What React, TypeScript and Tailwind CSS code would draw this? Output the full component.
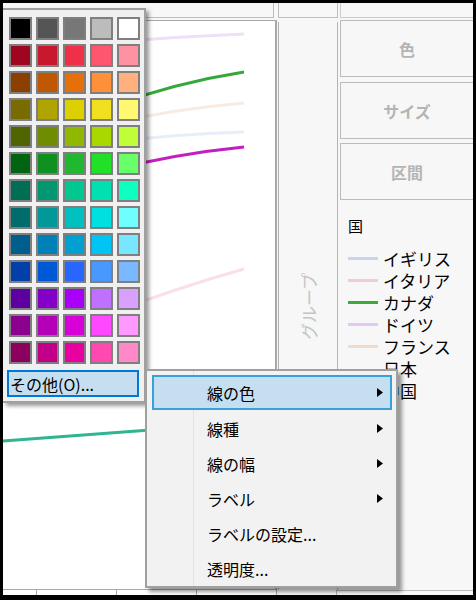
import React from 'react';

// 13 rows x 5 columns of the colour picker
const swatches: string[][] = [
  ['bg-[#000000]', 'bg-[#555555]', 'bg-[#777777]', 'bg-[#bcbcbc]', 'bg-[#ffffff]'],
  ['bg-[#a00520]', 'bg-[#c8182e]', 'bg-[#ef3048]', 'bg-[#ff5670]', 'bg-[#ff92a2]'],
  ['bg-[#8c4000]', 'bg-[#bf5800]', 'bg-[#e5700a]', 'bg-[#ff903a]', 'bg-[#ffb07e]'],
  ['bg-[#786c00]', 'bg-[#b0a400]', 'bg-[#dcd000]', 'bg-[#f0e020]', 'bg-[#fff870]'],
  ['bg-[#506400]', 'bg-[#708c00]', 'bg-[#90b800]', 'bg-[#a8d800]', 'bg-[#c0ff38]'],
  ['bg-[#006410]', 'bg-[#109020]', 'bg-[#20b830]', 'bg-[#20e028]', 'bg-[#68ff68]'],
  ['bg-[#006e54]', 'bg-[#009870]', 'bg-[#00c890]', 'bg-[#00e0b0]', 'bg-[#10ffc0]'],
  ['bg-[#006c6c]', 'bg-[#009898]', 'bg-[#00c0c0]', 'bg-[#00e0e0]', 'bg-[#70ffff]'],
  ['bg-[#005e8c]', 'bg-[#0080b8]', 'bg-[#00a0d0]', 'bg-[#00c4f4]', 'bg-[#78e6ff]'],
  ['bg-[#0040a8]', 'bg-[#0058d8]', 'bg-[#2866ff]', 'bg-[#4898ff]', 'bg-[#7ab8ff]'],
  ['bg-[#5e00a0]', 'bg-[#8400c8]', 'bg-[#a800f8]', 'bg-[#c070ff]', 'bg-[#d8a0ff]'],
  ['bg-[#8c0090]', 'bg-[#b400b8]', 'bg-[#d800d8]', 'bg-[#ff48ff]', 'bg-[#ff98ff]'],
  ['bg-[#8c0060]', 'bg-[#c00088]', 'bg-[#e800a0]', 'bg-[#ff48b0]', 'bg-[#ff88c8]'],
];

const legend = [
  { name: 'イギリス', color: 'bg-[#c8d4ee]' },
  { name: 'イタリア', color: 'bg-[#f0ccd3]' },
  { name: 'カナダ', color: 'bg-[#3aaa3a]' },
  { name: 'ドイツ', color: 'bg-[#e2c8f4]' },
  { name: 'フランス', color: 'bg-[#f0dccb]' },
  { name: '日本', color: 'bg-transparent' },
  { name: '中国', color: 'bg-transparent' },
];

const menuItems = [
  { label: '線の色', sub: true, active: true },
  { label: '線種', sub: true },
  { label: '線の幅', sub: true },
  { label: 'ラベル', sub: true },
  { label: 'ラベルの設定...' },
  { label: '透明度...' },
];

function ShelfButton({ label }: { label: string }) {
  return (
    <div className="h-[57px] border-y border-l border-[#bcbcbc] bg-[#f7f7f7] flex items-center justify-center text-[16px] font-bold text-[#b4b4b4]">
      {label}
    </div>
  );
}

function ChartLines() {
  return (
    <svg className="absolute left-0 top-0" width="274" height="570" viewBox="0 0 274 570" fill="none">
      <path d="M0 32 Q 120 18 241 13" stroke="#efdff8" strokeWidth="3" />
      <path d="M100 88 Q 170 62 241 51" stroke="#36a83a" strokeWidth="3" />
      <path d="M100 104 Q 170 88 241 82" stroke="#f8ebe1" strokeWidth="3" />
      <path d="M100 122 Q 170 113 241 111" stroke="#e8eef9" strokeWidth="3" />
      <path d="M100 151 Q 170 133 241 126" stroke="#c21ec2" strokeWidth="3" />
      <path d="M100 295 Q 170 268 241 248" stroke="#f9e0e6" strokeWidth="3" />
      <path d="M0 420 L 241 402" stroke="#2fb58f" strokeWidth="3" />
    </svg>
  );
}

export default function App() {
  return (
    <div className="w-[476px] h-[600px] bg-black pt-[3px] pl-[3px] font-['Noto_Sans_CJK_JP','Noto_Sans',sans-serif] text-black">
      <div className="relative w-[470px] h-[592px] bg-[#f7f7f7] flex flex-col overflow-hidden">
        {/* Header row */}
        <div className="flex h-[15px] shrink-0">
          <div className="w-[271px] border-r border-b border-[#bdbdbd]" />
          <div className="w-[4px]" />
          <div className="w-[60px] border-x border-b border-[#bdbdbd]" />
          <div className="w-[2px]" />
          <div className="flex-1 border-l border-b border-[#c8cec4]" />
        </div>

        {/* Main row */}
        <div className="flex flex-1 min-h-0">
          {/* Chart */}
          <div className="relative w-[274px] mt-[2px] bg-white border-t border-r-2 border-b border-[#a9a9a9]">
            <ChartLines />
          </div>

          {/* Group shelf */}
          <div className="ml-[1px] w-[60px] mt-[4px] border-x border-[#b4b4b4] bg-[#f7f7f7] flex items-center justify-center">
            <span className="[writing-mode:vertical-rl] [text-orientation:sideways] rotate-180 text-[17px] leading-none text-[#c4c4c4]">
              グループ
            </span>
          </div>

          {/* Right panel */}
          <div className="ml-[2px] flex-1 mt-[2px] flex flex-col">
            <ShelfButton label="色" />
            <div className="h-[5px]" />
            <ShelfButton label="サイズ" />
            <div className="h-[4px]" />
            <ShelfButton label="区間" />
            <div className="pl-[8px] pt-[17px]">
              <div className="h-[16px] flex items-center text-[15px] leading-none">国</div>
              <div className="mt-[14px] flex flex-col">
                {legend.map((item) => (
                  <div key={item.name} className="h-[22px] flex items-center">
                    <div className={`w-[30px] h-[3px] ${item.color}`} />
                    <span className="ml-[5px] text-[17px] leading-none">{item.name}</span>
                  </div>
                ))}
              </div>
            </div>
          </div>
        </div>

        {/* Bottom axis strip */}
        <div className="flex h-[5px] shrink-0">
          <div className="w-[34px] bg-white border-r border-[#a9a9a9]" />
          <div className="w-[80px] bg-white border-r border-[#a9a9a9]" />
          <div className="w-[80px] bg-white border-r border-[#a9a9a9]" />
          <div className="w-[80px] bg-white border-r border-[#a9a9a9]" />
          <div className="w-[60px] border-r border-[#b4b4b4]" />
          <div className="flex-1 border-t border-[#bcbcbc]" />
        </div>

        {/* Colour picker popup */}
        <div className="absolute left-0 top-[5px] w-[143px] h-[395px] bg-[#f0f0f0] border-t-2 border-r-2 border-b-2 border-[#a0a0a0] shadow-[3px_3px_4px_rgba(0,0,0,0.4)] pt-[7px] pl-[6px]">
          <div className="grid grid-cols-[repeat(5,23px)] gap-[4px]">
            {swatches.flat().map((c, i) => (
              <div key={i} className={`w-[23px] h-[23px] border-2 border-[#7f7f7f] ${c}`} />
            ))}
          </div>
          <div className="mt-[6px] -ml-[2px] w-[132px] h-[27px] border-2 border-[#0078d7] bg-[#c5dff0] flex items-center pl-[1px] text-[16px] leading-none">
            その他(O)...
          </div>
        </div>

        {/* Context menu */}
        <div className="absolute left-[142px] top-[366px] w-[253px] h-[219px] bg-[#f2f2f2] border-2 border-[#a0a0a0] shadow-[4px_4px_4px_rgba(0,0,0,0.4)] pt-[4px] pl-[5px] pr-[4px]">
          <div className="absolute left-[46px] top-0 bottom-0 w-[1px] bg-[#e2e2e2]" />
          {menuItems.map((item) => (
            <div
              key={item.label}
              className={`relative h-[35px] flex items-center border-2 pl-[53px] pr-[7px] text-[16px] leading-none ${
                item.active ? 'border-[#3aa0dc] bg-[#c5dff0] h-[34px] mb-[1px]' : 'border-transparent'
              }`}
            >
              <span className="flex-1">{item.label}</span>
              {item.sub && (
                <svg width="6" height="9" viewBox="0 0 6 9">
                  <polygon points="0,0 6,4.5 0,9" fill="#000" />
                </svg>
              )}
            </div>
          ))}
        </div>
      </div>
    </div>
  );
}
